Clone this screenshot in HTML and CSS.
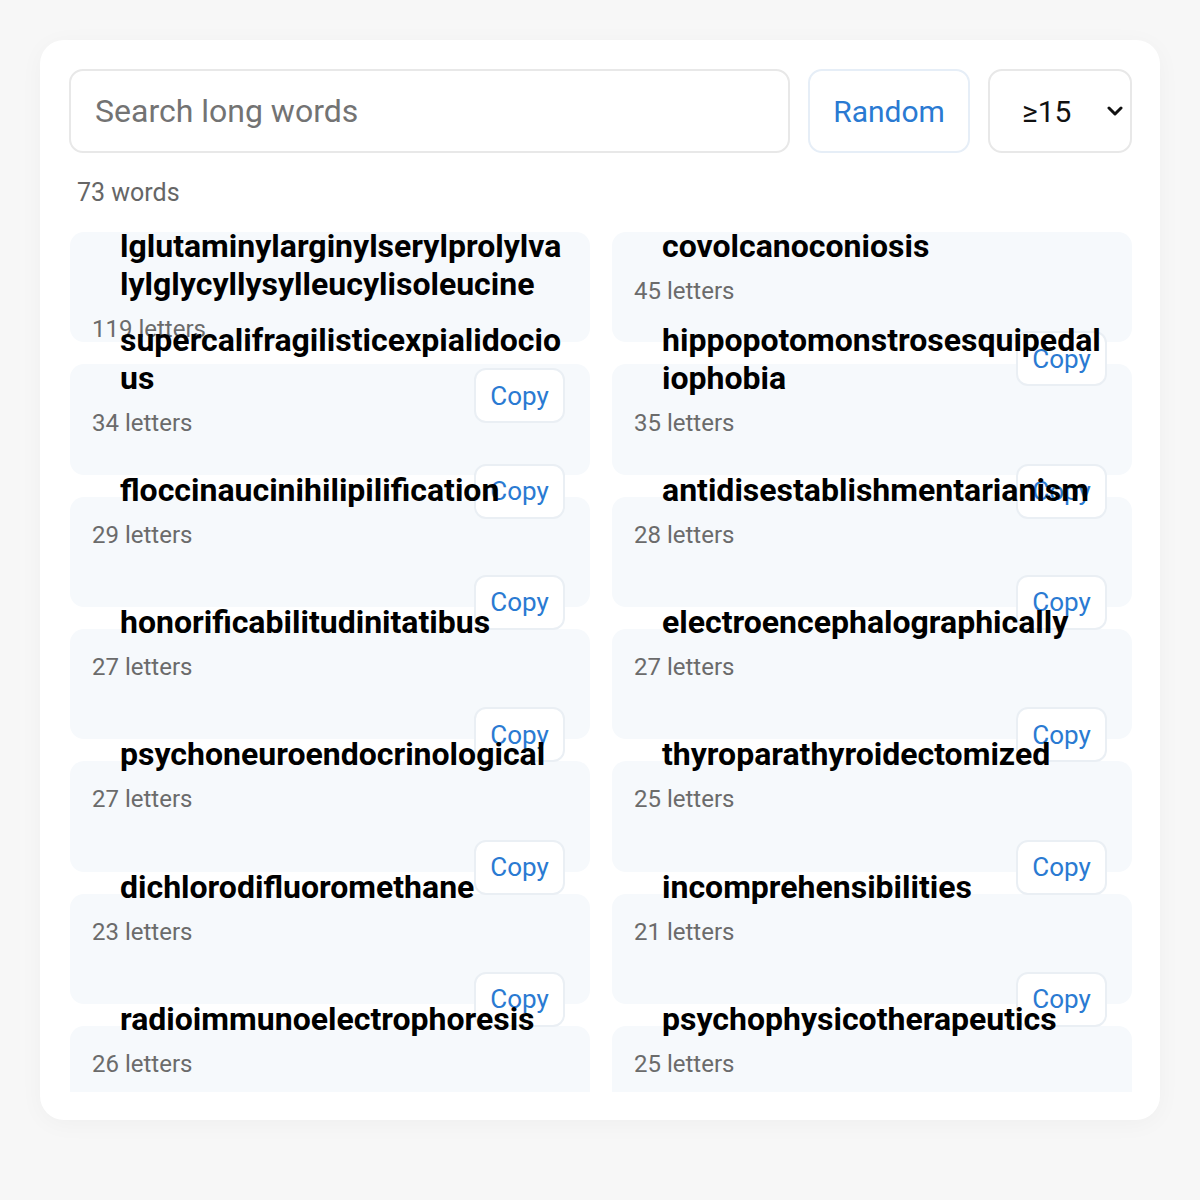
FILE: index.html
```html
<!DOCTYPE html>
<html lang="en">
<head>
    <meta charset="UTF-8" />
    <meta name="viewport" content="width=device-width, initial-scale=1" />
    <title>Long Words</title>
    <link rel="stylesheet" href="styles.css">
</head>
<body>

<div class="panel">
    <!-- Search bar -->
    <div class="toolbar">
        <input class="search" type="text" placeholder="Search long words">
        <button class="random-btn">Random</button>
        <div class="min-len">
            <select>
                <option>≥15</option>
                <option>≥20</option>
                <option>≥25</option>
            </select>
            <svg class="chev" width="16" height="10" viewBox="0 0 16 10">
                <path d="M2 2l6 6 6-6" fill="none" stroke="#111" stroke-width="3" stroke-linecap="round" stroke-linejoin="round"/>
            </svg>
        </div>
    </div>

    <p class="count">73 words</p>

    <!-- Word list -->
    <ul class="word-list">
        <li class="card">
            <div class="word">methionylthreonylthreonylglu<br>lglutaminylarginylserylprolylvalylglycyllysylleucylisoleucine</div>
            <div class="letters">119 letters</div>
            <button class="copy">Copy</button>
        </li>
        <li class="card">
            <div class="word">pneumonoultramicroscopicsili<br>covolcanoconiosis</div>
            <div class="letters">45 letters</div>
            <button class="copy">Copy</button>
        </li>
        <li class="card">
            <div class="word">supercalifragilisticexpialidocious</div>
            <div class="letters">34 letters</div>
            <button class="copy">Copy</button>
        </li>
        <li class="card">
            <div class="word">hippopotomonstrosesquipedaliophobia</div>
            <div class="letters">35 letters</div>
            <button class="copy">Copy</button>
        </li>
        <li class="card">
            <div class="word">floccinaucinihilipilification</div>
            <div class="letters">29 letters</div>
            <button class="copy">Copy</button>
        </li>
        <li class="card">
            <div class="word">antidisestablishmentarianism</div>
            <div class="letters">28 letters</div>
            <button class="copy">Copy</button>
        </li>
        <li class="card">
            <div class="word">honorificabilitudinitatibus</div>
            <div class="letters">27 letters</div>
            <button class="copy">Copy</button>
        </li>
        <li class="card">
            <div class="word">electroencephalographically</div>
            <div class="letters">27 letters</div>
            <button class="copy">Copy</button>
        </li>
        <li class="card">
            <div class="word">psychoneuroendocrinological</div>
            <div class="letters">27 letters</div>
            <button class="copy">Copy</button>
        </li>
        <li class="card">
            <div class="word">thyroparathyroidectomized</div>
            <div class="letters">25 letters</div>
            <button class="copy">Copy</button>
        </li>
        <li class="card">
            <div class="word">dichlorodifluoromethane</div>
            <div class="letters">23 letters</div>
            <button class="copy">Copy</button>
        </li>
        <li class="card">
            <div class="word">incomprehensibilities</div>
            <div class="letters">21 letters</div>
            <button class="copy">Copy</button>
        </li>
        <li class="card">
            <div class="word">radioimmunoelectrophoresis</div>
            <div class="letters">26 letters</div>
            <button class="copy">Copy</button>
        </li>
        <li class="card">
            <div class="word">psychophysicotherapeutics</div>
            <div class="letters">25 letters</div>
            <button class="copy">Copy</button>
        </li>
    </ul>
</div>

</body>
</html>
```

FILE: styles.css
```css
* { box-sizing: border-box; margin: 0; padding: 0; }
body {
    font-family: Roboto, "Liberation Sans", sans-serif;
    background: #f7f7f7;
    padding: 40px;
}

.panel {
    background: #fff;
    border-radius: 24px;
    padding: 29px 28px 28px 29px;
    box-shadow: 0 4px 24px rgba(0, 0, 0, 0.035);
}

/* — toolbar — */
.toolbar {
    display: flex;
    gap: 18px;
    height: 84px;
}
.search {
    flex: 1;
    border: 2px solid #e8e8e8;
    border-radius: 14px;
    padding: 0 24px;
    font: 32px Roboto, sans-serif;
    color: #222;
    outline: none;
}
.search::placeholder { color: #737373; }
.random-btn {
    width: 162px;
    background: #fff;
    border: 2px solid #e6eef7;
    border-radius: 14px;
    font: 30px Roboto, sans-serif;
    color: #2a7ad2;
    cursor: pointer;
}
.min-len {
    position: relative;
    width: 144px;
}
.min-len select {
    width: 100%;
    height: 100%;
    appearance: none;
    background: #fff;
    border: 2px solid #e8e8e8;
    border-radius: 14px;
    padding-left: 32px;
    font: 30px Roboto, sans-serif;
    color: #111;
}
.min-len .chev {
    position: absolute;
    right: 9px;
    top: 37px;
    pointer-events: none;
}

.count {
    margin: 24px 0 23px 8px;
    font-size: 25px;
    line-height: 32px;
    color: #666;
}

/* — word cards — */
.word-list {
    list-style: none;
    height: 860px;
    overflow: hidden;
    display: grid;
    grid-template-columns: 1fr 1fr;
    grid-auto-rows: 110.33px;
    gap: 22px;
    padding-left: 1px;
}
.card {
    position: relative;
    background: #f6f9fc;
    border-radius: 14px;
    padding: 0 22px;
}
.word {
    position: relative;
    z-index: 1;
    margin: -26px 4px 11px 28px;
    font-size: 32px;
    font-weight: 700;
    line-height: 38px;
    color: #000;
    word-break: break-all;
}
.card:nth-child(-n+4) .word { margin-top: -43px; }
.letters {
    font-size: 24px;
    line-height: 30px;
    color: #6b6b6b;
}
.copy {
    position: absolute;
    right: 25px;
    top: -54px;
    width: 91px;
    height: 55px;
    background: #fff;
    border: 2px solid #eaeff4;
    border-radius: 12px;
    font: 26px Roboto, sans-serif;
    color: #2a7ad2;
    cursor: pointer;
}
.card:nth-child(-n+2) .copy { top: -80px; }
.card:nth-child(3) .copy { top: 4px; }
.card:nth-child(4) .copy,
.card:nth-child(5) .copy,
.card:nth-child(6) .copy { top: -33px; }
```
